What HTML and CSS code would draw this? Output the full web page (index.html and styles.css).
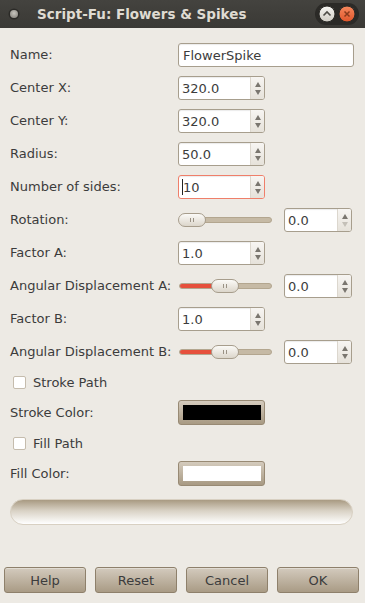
FILE: index.html
```html
<!DOCTYPE html>
<html lang="en">
<head>
    <meta charset="UTF-8">
    <title>Script-Fu: Flowers &amp; Spikes</title>
    <link rel="stylesheet" href="styles.css">
</head>
<body>
    <div class="window">
        <div class="titlebar">
            <span class="menu-dot"></span>
            <span class="title">Script-Fu: Flowers &amp; Spikes</span>
            <div class="wm-buttons">
                <svg class="wm-btn" width="18" height="18" viewBox="0 0 18 18">
                    <defs>
                        <linearGradient id="gmax" x1="0" y1="0" x2="0" y2="1">
                            <stop offset="0" stop-color="#f7f6f3"/>
                            <stop offset="1" stop-color="#cfcbc3"/>
                        </linearGradient>
                    </defs>
                    <circle cx="9" cy="9" r="8" fill="url(#gmax)" stroke="#2a2925"/>
                    <path d="M5.5 10.5 L9 7 L12.5 10.5" fill="none" stroke="#4d4b46" stroke-width="1.6"/>
                </svg>
                <svg class="wm-btn" width="18" height="18" viewBox="0 0 18 18">
                    <defs>
                        <linearGradient id="gclose" x1="0" y1="0" x2="0" y2="1">
                            <stop offset="0" stop-color="#f6895e"/>
                            <stop offset="1" stop-color="#e0552a"/>
                        </linearGradient>
                    </defs>
                    <circle cx="9" cy="9" r="8" fill="url(#gclose)" stroke="#2a2925"/>
                    <path d="M6.5 6.5 L11.5 11.5 M11.5 6.5 L6.5 11.5" stroke="#8a3a1c" stroke-width="1.5"/>
                </svg>
            </div>
        </div>

        <div class="content">
            <div class="form">
                <label class="lbl">Name:</label>
                <div class="entry wide">FlowerSpike</div>

                <label class="lbl">Center X:</label>
                <div class="spin"><span class="val">320.0</span><span class="arrows"><i class="up"></i><i class="down"></i></span></div>

                <label class="lbl">Center Y:</label>
                <div class="spin"><span class="val">320.0</span><span class="arrows"><i class="up"></i><i class="down"></i></span></div>

                <label class="lbl">Radius:</label>
                <div class="spin"><span class="val">50.0</span><span class="arrows"><i class="up"></i><i class="down"></i></span></div>

                <label class="lbl">Number of sides:</label>
                <div class="spin focused"><span class="val"><span class="caret"></span>10</span><span class="arrows"><i class="up"></i><i class="down"></i></span></div>

                <label class="lbl">Rotation:</label>
                <div class="scale-row">
                    <div class="scale">
                        <div class="trough"></div>
                        <div class="thumb" style="left: 0px"></div>
                    </div>
                    <div class="spin small"><span class="val">0.0</span><span class="arrows"><i class="up"></i><i class="down dim"></i></span></div>
                </div>

                <label class="lbl">Factor A:</label>
                <div class="spin"><span class="val">1.0</span><span class="arrows"><i class="up"></i><i class="down"></i></span></div>

                <label class="lbl">Angular Displacement A:</label>
                <div class="scale-row">
                    <div class="scale">
                        <div class="trough"><div class="fill" style="width: 40px"></div></div>
                        <div class="thumb" style="left: 33px"></div>
                    </div>
                    <div class="spin small"><span class="val">0.0</span><span class="arrows"><i class="up"></i><i class="down"></i></span></div>
                </div>

                <label class="lbl">Factor B:</label>
                <div class="spin"><span class="val">1.0</span><span class="arrows"><i class="up"></i><i class="down"></i></span></div>

                <label class="lbl">Angular Displacement B:</label>
                <div class="scale-row">
                    <div class="scale">
                        <div class="trough"><div class="fill" style="width: 40px"></div></div>
                        <div class="thumb" style="left: 33px"></div>
                    </div>
                    <div class="spin small"><span class="val">0.0</span><span class="arrows"><i class="up"></i><i class="down"></i></span></div>
                </div>

                <div class="check-row"><span class="check"></span>Stroke Path</div>

                <label class="lbl">Stroke Color:</label>
                <div class="color-btn"><span class="swatch black"></span></div>

                <div class="check-row"><span class="check"></span>Fill Path</div>

                <label class="lbl">Fill Color:</label>
                <div class="color-btn"><span class="swatch white"></span></div>
            </div>

            <div class="progress"></div>
        </div>

        <div class="actions">
            <button class="btn">Help</button>
            <button class="btn">Reset</button>
            <button class="btn">Cancel</button>
            <button class="btn">OK</button>
        </div>
    </div>
</body>
</html>
```

FILE: styles.css
```css
body {
    margin: 0;
    font-family: "DejaVu Sans", sans-serif;
    font-size: 13px;
    color: #3c3c3c;
    background-color: #edeae4;
}
.window {
    width: 365px;
    height: 603px;
    display: flex;
    flex-direction: column;
    background-color: #edeae4;
}
.titlebar {
    height: 28px;
    flex: none;
    display: flex;
    align-items: center;
    background: linear-gradient(#44433f, #3a3935);
}
.menu-dot {
    width: 8px;
    height: 8px;
    border-radius: 50%;
    background: radial-gradient(circle at 50% 40%, #c9c6bf, #7d7a73);
    box-shadow: 0 0 0 1.5px #2b2a27;
    margin-left: 10px;
}
.title {
    margin-left: 19px;
    font-weight: bold;
    font-size: 13.5px;
    color: #dfdbd2;
}
.wm-buttons {
    margin-left: auto;
    margin-right: 6px;
    display: flex;
    gap: 2px;
    padding: 2px 3px;
    border-radius: 12px;
    background: #2b2a27;
}
.wm-btn {
    display: block;
}
.content {
    padding: 15px 12px 0 10px;
}
.form {
    display: grid;
    grid-template-columns: 168px 1fr;
    row-gap: 9px;
    align-items: center;
}
.lbl {
    line-height: 24px;
}
.entry, .spin {
    height: 22px;
    border: 1px solid #a79e8d;
    border-radius: 3px;
    background: #fff;
    box-shadow: inset 0 1px 1px rgba(0,0,0,0.08);
    display: flex;
    align-items: center;
}
.entry.wide {
    padding-left: 4px;
    width: 170px;
}
.spin {
    width: 85px;
    overflow: hidden;
}
.spin.small {
    width: 66px;
}
.spin.focused {
    border-color: #ef7f6a;
}
.val {
    flex: 1;
    padding-left: 3px;
    display: flex;
    align-items: center;
}
.caret {
    width: 1px;
    height: 16px;
    background: #222;
}
.arrows {
    width: 14px;
    height: 100%;
    border-left: 1px solid #dcd7ce;
    background: linear-gradient(#f7f5f2, #e6e2da);
    display: flex;
    flex-direction: column;
    align-items: center;
    justify-content: space-around;
    padding: 3px 0;
    box-sizing: border-box;
}
.arrows i {
    width: 0;
    height: 0;
    border-left: 3px solid transparent;
    border-right: 3px solid transparent;
}
.arrows .up {
    border-bottom: 5px solid #7a766f;
}
.arrows .down {
    border-top: 5px solid #7a766f;
}
.arrows .down.dim {
    border-top-color: #c4c0b8;
}
.scale-row {
    display: flex;
    align-items: center;
    gap: 12px;
}
.scale {
    position: relative;
    width: 94px;
    height: 14px;
    flex: none;
}
.trough {
    position: absolute;
    left: 1px;
    right: 0;
    top: 4px;
    height: 6px;
    border-radius: 3px;
    background: #c6baa5;
    border: 1px solid #b3a68f;
    box-sizing: border-box;
    overflow: hidden;
}
.fill {
    height: 100%;
    background: #e6503c;
}
.thumb {
    position: absolute;
    top: 0;
    width: 26px;
    height: 12px;
    border: 1px solid #a79d8c;
    border-radius: 7px;
    background: linear-gradient(#fbfaf7, #dcd6cb);
}
.thumb::before, .thumb::after {
    content: "";
    position: absolute;
    top: 4px;
    width: 1px;
    height: 4px;
    background: #9a9285;
}
.thumb::before {
    left: 11px;
}
.thumb::after {
    left: 14px;
}
.check-row {
    grid-column: 1 / 3;
    display: flex;
    align-items: center;
    height: 18px;
    padding-left: 3px;
}
.check {
    width: 11px;
    height: 11px;
    border: 1px solid #c5bcad;
    border-radius: 2px;
    background: #fff;
    margin-right: 7px;
}
.color-btn {
    width: 87px;
    height: 25px;
    box-sizing: border-box;
    border: 1px solid #988a74;
    border-radius: 3px;
    background: linear-gradient(#d4cbbd, #a89a83);
    display: flex;
    align-items: center;
    justify-content: center;
}
.swatch {
    width: 78px;
    height: 15px;
}
.swatch.black {
    background: #000;
}
.swatch.white {
    background: #fff;
}
.progress {
    margin-top: 13px;
    width: 343px;
    height: 26px;
    box-sizing: border-box;
    border-radius: 13px;
    border: 1px solid #d8d0c2;
    background: linear-gradient(#a89a82, #d9d2c5 45%, #ffffff);
}
.actions {
    margin-top: auto;
    padding: 0 6px 10px 4px;
    display: flex;
    gap: 9px;
}
.btn {
    width: 82px;
    height: 26px;
    border: 1px solid #8e806b;
    border-radius: 3px;
    background: linear-gradient(#d3cabd, #a99b85);
    font-family: "DejaVu Sans", sans-serif;
    font-size: 13px;
    color: #3c3c3c;
    padding: 0;
    box-shadow: inset 0 1px 0 rgba(255,255,255,0.35);
}
```
